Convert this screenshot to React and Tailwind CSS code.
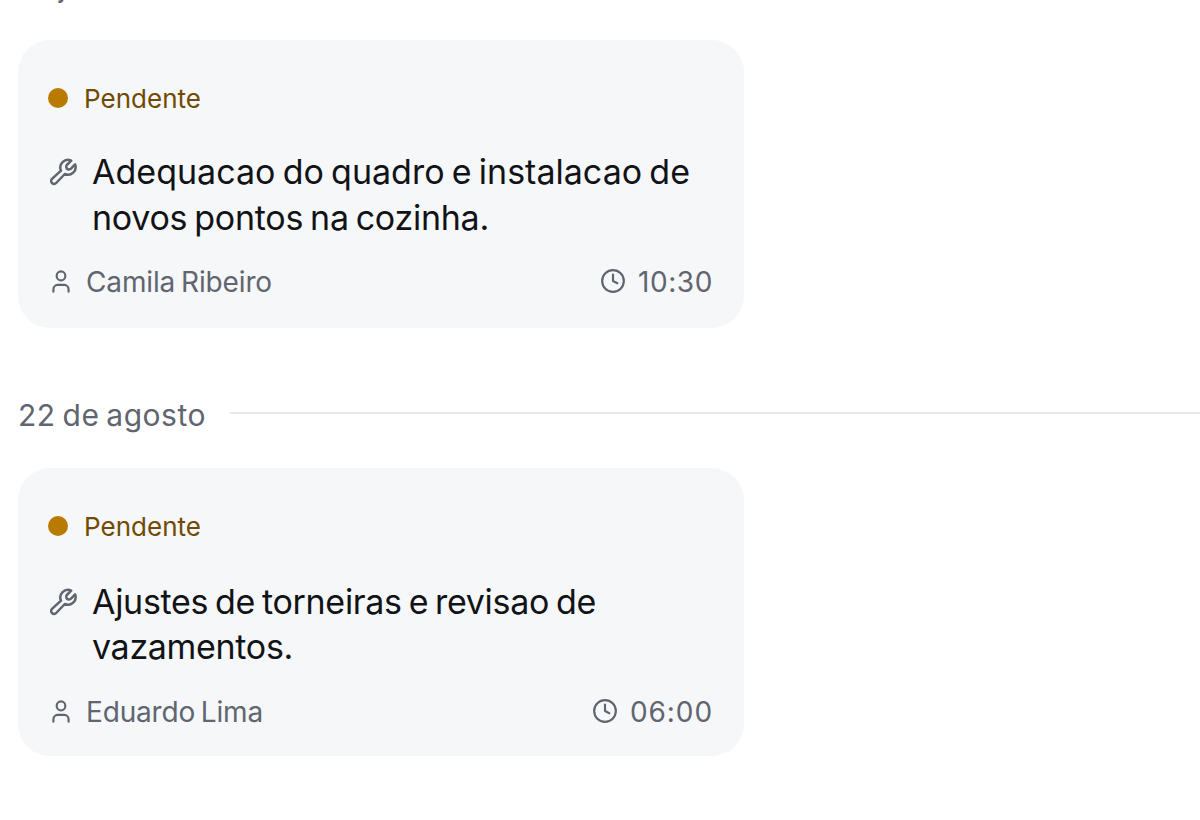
import { User, Clock } from "lucide-react";

const services = [
  { id: 1, lines: [["Adequacao do quadro e instalacao de", 598], ["novos pontos na cozinha.", 397]], person: ["Camila Ribeiro", 186], time: ["10:30", 75] },
  { id: 2, lines: [["Ajustes de torneiras e revisao de", 504], ["vazamentos.", 201]], person: ["Eduardo Lima", 177], time: ["06:00", 83] },
];

function Wrench() {
  return (
    <svg className="mt-[10px] ml-0.5 size-[28px] shrink-0 text-[#60656f]" viewBox="0 0 28 28" fill="none" stroke="currentColor" strokeWidth="2.5" strokeLinejoin="round" aria-hidden="true">
      <path d="M21.2 2.6 16.8 7Q16 8 16.4 9.6 16.8 11.2 18.3 11.4 20 11.7 21 10.7L25.1 6.4A7.6 7.6 0 0 1 14.8 16L6.2 25A2.8 2.8 0 0 1 2 20.9L11 12.6A7.6 7.6 0 0 1 21.2 2.6Z" />
    </svg>
  );
}

function FitText({ text, width }) {
  return (
    <span
      className="block whitespace-nowrap [word-spacing:-0.07em]"
      ref={(el) => {
        if (!el) return;
        el.style.letterSpacing = "0px";
        el.style.width = "max-content";
        const natural = el.getBoundingClientRect().width;
        el.style.letterSpacing = `${(width - natural) / text.length}px`;
      }}
    >
      {text}
    </span>
  );
}

function ServiceCard({ service, second }) {
  return (
    <article className="h-72 w-[726px] shrink-0 rounded-[32px] bg-[#f6f7f9] px-[30px] pt-[42px]">
      <div className="flex h-8 items-center gap-4 text-[26px] leading-8 text-[#704a00]">
        <span className="size-5 rounded-full bg-[#b97a00]" />
        <div className="pt-0.5"><FitText text="Pendente" width={117} /></div>
      </div>
      <div className={second ? "mt-9 flex h-[92px] gap-[14px]" : "mt-[34px] flex h-[92px] gap-[14px]"}>
        <Wrench />
        <div className={second ? "pt-px text-[34px] leading-[45px] text-[#111316]" : "pt-px text-[34px] leading-[46px] text-[#111316]"}>
          {service.lines.map(([text, width]) => <FitText key={text} text={text} width={width} />)}
        </div>
      </div>
      <div className="mt-[22px] flex items-center justify-between text-[28px] leading-10 text-[#60656f]">
        <div className="flex items-center gap-3">
          <User className="mb-0.5 h-[27px] w-[26px]" preserveAspectRatio="none" />
          <FitText text={service.person[0]} width={service.person[1]} />
        </div>
        <div className="mr-px flex items-center gap-3">
          <Clock className="mb-0.5 size-[26px]" />
          <FitText text={service.time[0]} width={service.time[1]} />
        </div>
      </div>
    </article>
  );
}

export default function App() {
  return (
    <main className="flex h-[820px] w-full flex-col overflow-hidden bg-white pl-[18px] font-['Inter',sans-serif]">
      <div className="flex h-10 shrink-0 items-end pb-[34px] text-[30px] leading-10 text-[#60656f]">
        <FitText text="Hoje" width={66} />
      </div>
      <ServiceCard service={services[0]} />
      <div className="flex h-[140px] shrink-0 items-center gap-6 pt-[30px] text-[30px] text-[#60656f]">
        <div className="pt-1"><FitText text="22 de agosto" width={188} /></div>
        <span className="h-0.5 flex-1 bg-[#e5e7ea]" />
      </div>
      <ServiceCard service={services[1]} second />
    </main>
  );
}
